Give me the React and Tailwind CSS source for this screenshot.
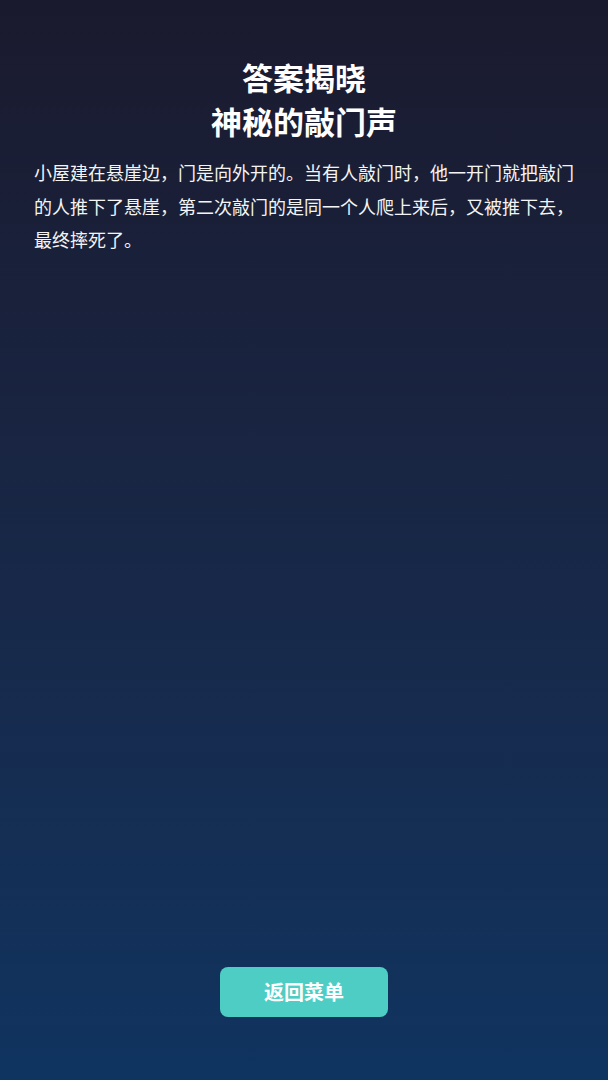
export default function App() {
  return (
    <div
      className="flex min-h-[1080px] w-full flex-col bg-gradient-to-b from-[#1a1a2e] to-[#0f3460] px-[34px] text-white"
      style={{ fontFamily: '"Noto Sans CJK SC", "Noto Sans", sans-serif' }}
    >
      <div className="pt-[55px] text-center text-[31px] font-bold leading-[44px]">
        <div>答案揭晓</div>
        <div>神秘的敲门声</div>
      </div>
      <p className="mt-[13px] text-[18px] leading-[33.5px] text-[#f4f4f4]">
        小屋建在悬崖边，门是向外开的。当有人敲门时，他一开门就把敲门的人推下了悬崖，第二次敲门的是同一个人爬上来后，又被推下去，最终摔死了。
      </p>
      <div className="mt-auto flex justify-center pb-[63px]">
        <button className="h-[50px] w-[168px] rounded-[8px] bg-[#4ecdc4] text-[20px] font-bold text-white">
          返回菜单
        </button>
      </div>
    </div>
  );
}
